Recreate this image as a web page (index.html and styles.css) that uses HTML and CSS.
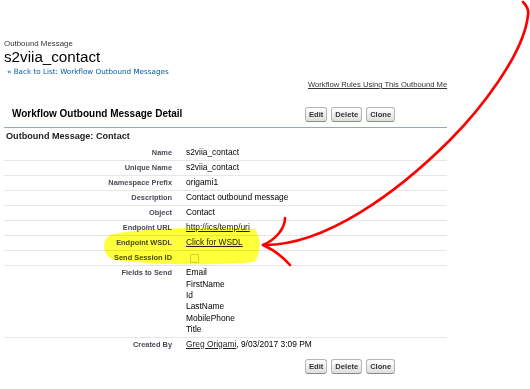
FILE: index.html
```html
<!DOCTYPE html>
<html lang="en">
<head>
  <meta charset="utf-8">
  <title>Outbound Message: s2viia_contact</title>
  <link rel="stylesheet" href="styles.css">
</head>
<body>
<div class="page">
  <div class="ptBody">
    <div class="pageType">Outbound Message</div>
    <h1 class="pageDescription">s2viia_contact</h1>
    <div class="ptBreadcrumb"><a href="#">&laquo; Back to List: Workflow Outbound Messages</a></div>
  </div>
  <div class="listHoverLinks"><a href="#">Workflow Rules Using This Outbound Me</a></div>
  <div class="bPageBlock">
    <div class="pbHeader">
      <h2 class="mainTitle">Workflow Outbound Message Detail</h2>
      <div class="pbButton">
        <button class="btn">Edit</button>
        <button class="btn">Delete</button>
        <button class="btn">Clone</button>
      </div>
    </div>
    <h3 class="pbSubheader">Outbound Message: Contact</h3>
    <div class="detailList">
      <div class="row"><div class="labelCol">Name</div><div class="dataCol">s2viia_contact</div></div>
      <div class="row"><div class="labelCol">Unique Name</div><div class="dataCol">s2viia_contact</div></div>
      <div class="row"><div class="labelCol">Namespace Prefix</div><div class="dataCol">origami1</div></div>
      <div class="row"><div class="labelCol">Description</div><div class="dataCol">Contact outbound message</div></div>
      <div class="row"><div class="labelCol">Object</div><div class="dataCol">Contact</div></div>
      <div class="row"><div class="labelCol">Endpoint URL</div><div class="dataCol"><a href="#">http://ics/temp/uri</a></div></div>
      <div class="row"><div class="labelCol">Endpoint WSDL</div><div class="dataCol"><a href="#">Click for WSDL</a></div></div>
      <div class="row"><div class="labelCol">Send Session ID</div><div class="dataCol"><span class="checkbox"></span></div></div>
      <div class="row fields"><div class="labelCol">Fields to Send</div><div class="dataCol">Email<br>FirstName<br>Id<br>LastName<br>MobilePhone<br>Title</div></div>
      <div class="row last"><div class="labelCol">Created By</div><div class="dataCol"><a href="#">Greg Origami</a>, 9/03/2017 3:09 PM</div></div>
    </div>
    <div class="pbBottomButtons">
      <div></div>
      <div class="pbButton">
        <button class="btn">Edit</button>
        <button class="btn">Delete</button>
        <button class="btn">Clone</button>
      </div>
    </div>
  </div>
  <svg class="annotation" width="530" height="389" viewBox="0 0 530 389">
    <path class="marker" d="M110,235 C130,228 220,226 254,229 C262,236 261,255 254,262 C210,266 130,265 110,258 C102,252 102,240 110,235 Z"/>
    <path class="arrow" d="M523,2 C527,6 529,10 528,15 C524,55 478,112 450,140 C398,192 325,246 263,245"/>
    <path class="arrow" d="M285,218 C285,229 275,240 263,245 C272,249 282,256 290,265"/>
  </svg>
</div>
</body>
</html>
```

FILE: styles.css
```css
body { margin: 0; font-family: "Liberation Sans", Arial, sans-serif; color: #000; background: #fff; }
.page { position: relative; width: 530px; height: 389px; overflow: hidden; padding-left: 4px; box-sizing: border-box; }

.pageType { padding-top: 39px; font-size: 7.9px; line-height: 10px; color: #333; }
.pageDescription { margin: 0; font-size: 15.2px; font-weight: normal; line-height: 16px; }
.ptBreadcrumb { margin-top: 2px; padding-left: 3px; font-family: "DejaVu Sans", Verdana, sans-serif; font-size: 7.2px; line-height: 10px; }
.ptBreadcrumb a { color: #015ba7; text-decoration: none; }

.listHoverLinks { margin: 3px 0 0 304px; white-space: nowrap; font-size: 7.63px; line-height: 10px; }
.listHoverLinks a { color: #333; }

.bPageBlock { width: 443px; margin-top: 14.5px; }
.pbHeader { display: grid; grid-template-columns: 301px auto; align-items: center; padding: 2px 0 5px; border-bottom: 1px solid #97a4c0; }
.mainTitle { margin: 0 0 0 8px; font-size: 10px; line-height: 12px; }
.pbButton { display: flex; gap: 4px; }
.btn { height: 15px; padding: 0 3px; font: bold 7.6px "Liberation Sans", Arial, sans-serif; color: #333; border: 1px solid #b5b5b5; border-bottom-color: #8a8a8a; border-radius: 3px; background: linear-gradient(#fff, #f3f3f3 40%, #dedede); }

.pbSubheader { margin: 2.5px 0 4.3px; padding-left: 2px; font-size: 9.1px; line-height: 12px; color: #222; }

.row { display: grid; grid-template-columns: 168px 1fr; column-gap: 14px; padding: 2px 0; line-height: 9.9px; border-bottom: 1px solid #e6e6ea; }
.row.fields { padding: 1.5px 0 1px; line-height: 11.4px; }
.row.last { border-bottom: none; }
.labelCol { text-align: right; font-size: 7.4px; font-weight: bold; color: #4a4a56; }
.dataCol { font-size: 8.4px; }
.dataCol a { color: #222; }
.checkbox { display: inline-block; width: 7px; height: 7px; margin: 1px 0 0 4px; border: 1px solid #cfcfcf; border-radius: 1px; vertical-align: top; }

.pbBottomButtons { display: grid; grid-template-columns: 301px auto; margin-top: 8px; }

.annotation { position: absolute; left: 0; top: 0; pointer-events: none; }
.marker { fill: #ffff3a; mix-blend-mode: multiply; }
.arrow { fill: none; stroke: #ff0000; stroke-width: 2.6; stroke-linecap: round; stroke-linejoin: round; }
```
